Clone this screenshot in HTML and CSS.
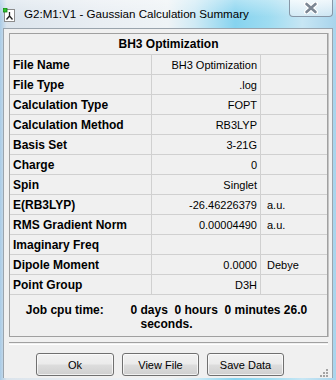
FILE: index.html
```html
<!DOCTYPE html>
<html lang="en">
  <head>
    <meta charset="UTF-8" />
    <title>G2:M1:V1 - Gaussian Calculation Summary</title>
    <link rel="stylesheet" href="styles.css">
  </head>
  <body>
    <div class="window">
      <div class="titlebar">
        <svg class="app-icon" width="12" height="14" viewBox="0 0 12 14">
          <rect x="1.5" y="1.5" width="10" height="12" fill="#fff" stroke="#8c8c8c" />
          <path d="M6.5 4 V8 M6.5 8 L3.5 11.5 M6.5 8 L9.5 11.5" stroke="#222" stroke-width="1.3" fill="none" />
          <rect x="0" y="0" width="4" height="4" fill="#2fc12f" stroke="#137a13" stroke-width="0.8" />
        </svg>
        <span class="title">G2:M1:V1 - Gaussian Calculation Summary</span>
        <div class="close-btn">
          <svg width="16" height="12" viewBox="0 0 16 12">
            <path d="M3.5 2 L12.5 10 M12.5 2 L3.5 10" stroke="#fff" stroke-width="5" stroke-linecap="round" />
            <path d="M3.5 2 L12.5 10 M12.5 2 L3.5 10" stroke="#7b8693" stroke-width="2.6" stroke-linecap="round" />
          </svg>
        </div>
      </div>

      <div class="client">
        <div class="summary">
          <div class="summary-head">BH3 Optimization</div>
          <div class="row"><div class="label">File Name</div><div class="value">BH3 Optimization</div><div class="unit"></div></div>
          <div class="row"><div class="label">File Type</div><div class="value">.log</div><div class="unit"></div></div>
          <div class="row"><div class="label">Calculation Type</div><div class="value">FOPT</div><div class="unit"></div></div>
          <div class="row"><div class="label">Calculation Method</div><div class="value">RB3LYP</div><div class="unit"></div></div>
          <div class="row"><div class="label">Basis Set</div><div class="value">3-21G</div><div class="unit"></div></div>
          <div class="row"><div class="label">Charge</div><div class="value">0</div><div class="unit"></div></div>
          <div class="row"><div class="label">Spin</div><div class="value">Singlet</div><div class="unit"></div></div>
          <div class="row"><div class="label">E(RB3LYP)</div><div class="value">-26.46226379</div><div class="unit">a.u.</div></div>
          <div class="row"><div class="label">RMS Gradient Norm</div><div class="value">0.00004490</div><div class="unit">a.u.</div></div>
          <div class="row"><div class="label">Imaginary Freq</div><div class="value"></div><div class="unit"></div></div>
          <div class="row"><div class="label">Dipole Moment</div><div class="value">0.0000</div><div class="unit">Debye</div></div>
          <div class="row"><div class="label">Point Group</div><div class="value">D3H</div><div class="unit"></div></div>
          <div class="cpu-time">Job cpu time:        0 days  0 hours  0 minutes 26.0<br>seconds.</div>
        </div>

        <div class="separator"></div>

        <div class="buttons">
          <button class="btn">Ok</button>
          <button class="btn">View File</button>
          <button class="btn">Save Data</button>
          <svg class="grip" width="10" height="10" viewBox="0 0 10 10">
            <g fill="#a4a4a4">
              <rect x="7" y="1" width="2" height="2" />
              <rect x="4" y="4" width="2" height="2" />
              <rect x="7" y="4" width="2" height="2" />
              <rect x="1" y="7" width="2" height="2" />
              <rect x="4" y="7" width="2" height="2" />
              <rect x="7" y="7" width="2" height="2" />
            </g>
          </svg>
        </div>
      </div>
    </div>
  </body>
</html>
```

FILE: styles.css
```css
html {
  height: 100%;
}
body {
  margin: 0;
  width: 336px;
  height: 380px;
  overflow: hidden;
  /* ガラス風の枠 */
  background: linear-gradient(to right, #a9cbe6 0, #dbe4ec 2%, #e9eef3 30%, #eef3f6 50%, #cfeaf5 58%, #86d3ef 70%, #9edcf1 80%, #c7e6f4 90%, #a8d4ec 100%);
  font-family: "Liberation Sans", Arial, sans-serif;
}

.window {
  display: flex;
  flex-direction: column;
  height: 100%;
}

.titlebar {
  height: 28px;
  display: flex;
  align-items: flex-start;
  background: linear-gradient(to bottom, rgba(255, 255, 255, 0.35), rgba(255, 255, 255, 0) 60%);
}

.app-icon {
  margin: 8px 0 0 3px;
}

.title {
  margin: 7px 0 0 9px;
  font-size: 11.6px;
  color: #000;
  line-height: 14px;
}

.close-btn {
  margin-left: auto;
  margin-right: 3px;
  width: 44px;
  height: 17px;
  box-sizing: border-box;
  border: 1px solid #8796a6;
  border-top: none;
  border-radius: 0 0 4px 4px;
  background: linear-gradient(to bottom, rgba(255, 255, 255, 0.7), rgba(225, 238, 246, 0.6));
  display: flex;
  align-items: center;
  justify-content: center;
}

.client {
  flex-grow: 1;
  margin: 0 3px 2px 3px;
  border: 1px solid #9aa4ad;
  border-bottom: none;
  background-color: #f0f0f0;
  display: flex;
  flex-direction: column;
}

.summary {
  margin: 4px 4px 0 5px;
  border: 1px solid #a0a0a0;
  box-shadow: 1px 0 0 #c4c4c4;
  color: #000;
}

.summary-head {
  height: 20px;
  line-height: 20px;
  border-bottom: 1px solid #d0d0d0;
  text-align: center;
  font-weight: bold;
  font-size: 12px;
}

.row {
  display: grid;
  grid-template-columns: 142px 109px 1fr;
  height: 20px;
  box-sizing: border-box;
  border-bottom: 1px solid #d0d0d0;
}

.row > div {
  line-height: 20px;
  white-space: nowrap;
}

.label {
  border-right: 1px solid #d0d0d0;
  padding-left: 3px;
  font-weight: bold;
  font-size: 12px;
}

.value {
  border-right: 1px solid #d0d0d0;
  padding-right: 3px;
  text-align: right;
  font-size: 11px;
}

.unit {
  padding-left: 6px;
  font-size: 11px;
}

.cpu-time {
  height: 41px;
  box-sizing: border-box;
  padding-top: 8px;
  padding-right: 4px;
  text-align: center;
  white-space: pre;
  font-weight: bold;
  font-size: 12px;
  line-height: 14px;
}

.separator {
  margin: 5px 4px 0 5px;
  height: 1px;
  border-top: 1px solid #a0a0a0;
  border-bottom: 1px solid #fff;
}

.buttons {
  display: flex;
  gap: 8px;
  margin-top: 8px;
  padding-left: 32px;
}

.btn {
  width: 77px;
  height: 23px;
  padding: 0;
  border: 1px solid #707070;
  border-radius: 3px;
  background: linear-gradient(to bottom, #f2f2f2 0%, #ebebeb 48%, #dddddd 52%, #cfcfcf 100%);
  box-shadow: inset 0 0 0 1px rgba(255, 255, 255, 0.7);
  font-family: "Liberation Sans", Arial, sans-serif;
  font-size: 11px;
  color: #000;
}

.btn:first-child {
  width: 78px;
}

.grip {
  margin-left: auto;
  margin-right: 3px;
  align-self: flex-end;
  margin-bottom: -2px;
}
```
